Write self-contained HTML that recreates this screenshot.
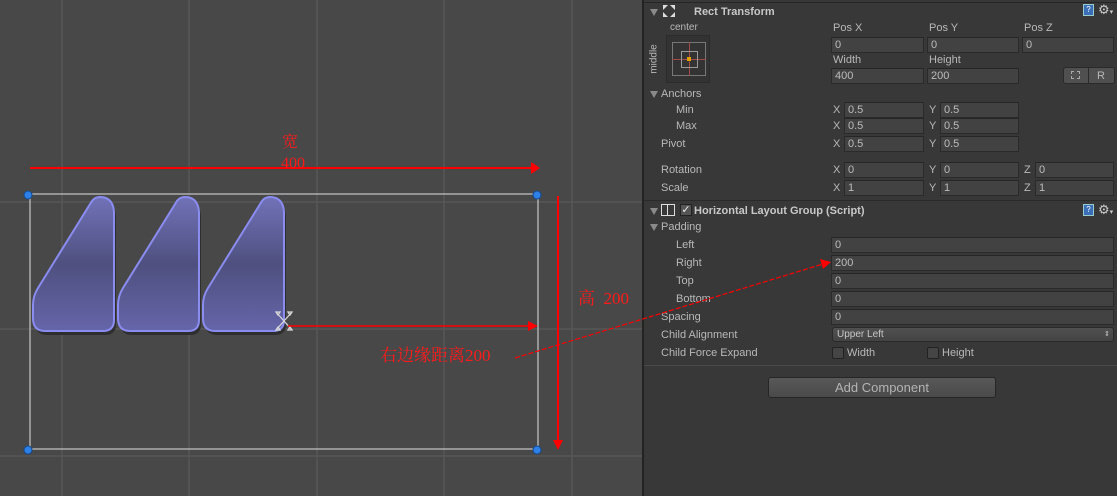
<!DOCTYPE html>
<html><head><meta charset="utf-8"><style>
*{margin:0;padding:0;box-sizing:border-box}
body{width:1117px;height:496px;overflow:hidden;background:#484848;font-family:"Liberation Sans","DejaVu Sans",sans-serif;position:relative}
#scene{position:absolute;left:0;top:0;width:644px;height:496px;background:#484848}
#panel{position:absolute;left:642px;top:0;width:475px;height:496px;background:#383838;border-left:2px solid #232323;color:#b8b8b8;font-size:11px}
.a{position:absolute;white-space:nowrap;line-height:14px}
.f{position:absolute;height:16px;background:#424242;border:1px solid #2a2a2a;border-top-color:#262626;color:#bcbcbc;font-size:11px;line-height:14px;padding-left:3px}
.hd{position:absolute;left:0;width:475px;height:1px;background:#262626}
.tri{position:absolute;width:0;height:0;border-left:4px solid transparent;border-right:4px solid transparent;border-top:7px solid #8a8a8a}
.cb{position:absolute;width:12px;height:12px;background:#454545;border:1px solid #222;border-radius:2px}
</style></head><body>
<div id="scene">
<svg width="644" height="496" style="position:absolute;left:0;top:0">
<g stroke="#575757" stroke-width="1.5">
<line x1="62" y1="0" x2="62" y2="496"/><line x1="189" y1="0" x2="189" y2="496"/><line x1="317" y1="0" x2="317" y2="496"/><line x1="444" y1="0" x2="444" y2="496"/><line x1="572" y1="0" x2="572" y2="496"/>
<line x1="0" y1="202" x2="644" y2="202"/><line x1="0" y1="329" x2="644" y2="329"/><line x1="0" y1="456" x2="644" y2="456"/>
</g>
<defs>
<linearGradient id="g" x1="0" y1="0" x2="0" y2="1"><stop offset="0" stop-color="#7172b8"/><stop offset="0.5" stop-color="#4f507f"/><stop offset="1" stop-color="#6565aa"/></linearGradient>
<path id="s" d="M100 197 Q113 197 114 212 L114 320 Q114 331 103 331 L45 331 Q33 331 33 318 L33 305 Q33 296 38 288 L92 201 Q95 197 100 197 Z"/>
</defs>
<g>
<use href="#s" transform="translate(2,4)" fill="#2e2e2e"/>
<use href="#s" transform="translate(87,4)" fill="#2e2e2e"/>
<use href="#s" transform="translate(172,4)" fill="#2e2e2e"/>
<use href="#s" fill="url(#g)" stroke="#8a8cf0" stroke-width="2"/>
<use href="#s" transform="translate(85,0)" fill="url(#g)" stroke="#8a8cf0" stroke-width="2"/>
<use href="#s" transform="translate(170,0)" fill="url(#g)" stroke="#8a8cf0" stroke-width="2"/>
</g>
<rect x="30" y="194" width="508" height="255" fill="none" stroke="#bdbdbd" stroke-width="1.3"/>
<g fill="#2e7fe6" stroke="#124a90" stroke-width="1"><circle cx="28" cy="195" r="4"/><circle cx="537" cy="195" r="4"/><circle cx="28" cy="450" r="4"/><circle cx="537" cy="450" r="4"/></g>
<g stroke="#d8d8d8" stroke-width="1.3" fill="none">
<path d="M276 312 L292 330 M292 312 L276 330"/><path d="M276 312 l4 0 l-2 3 z M292 312 l-4 0 l2 3z M276 330 l4 0 l-2 -3z M292 330 l-4 0 l2 -3z"/>
</g>
<g stroke="#ff0000" stroke-width="2" fill="#ff0000">
<line x1="30" y1="168" x2="532" y2="168"/><path d="M531 162 L540 168 L531 174 Z" stroke="none"/>
<line x1="558" y1="196" x2="558" y2="442"/><path d="M553 440 L558 450 L563 440 Z" stroke="none"/>
<line x1="288" y1="326" x2="530" y2="326" stroke-width="1.5"/><path d="M528 321 L538 326 L528 331 Z" stroke="none"/>
</g>
</svg>
<div class="a" style="left:282px;top:136px;color:#ff1a1a;font-family:'Liberation Serif','Noto Serif CJK SC',serif;font-size:16px">宽</div>
<div class="a" style="left:281px;top:157px;color:#ff1a1a;font-family:'Liberation Serif',serif;font-size:16px">400</div>
<div class="a" style="left:578px;top:292px;color:#ff1a1a;font-family:'Liberation Serif','Noto Serif CJK SC',serif;font-size:17px">高&nbsp; 200</div>
<div class="a" style="left:380px;top:349px;color:#ff1a1a;font-family:'Liberation Serif','Noto Serif CJK SC',serif;font-size:17px">右边缘距离200</div>
</div>
<div id="panel">
<div class="hd" style="top:2px"></div>
<div class="tri" style="left:6px;top:9px"></div>
<svg class="a" style="left:17px;top:3px" width="16" height="16"><g fill="#ddd"><path d="M2 2 L7 2 L2 7Z M14 2 L9 2 L14 7Z M2 14 L7 14 L2 9Z M14 14 L9 14 L14 9Z"/></g></svg>
<div class="a" style="left:50px;top:5px;font-weight:bold;color:#c8c8c8">Rect Transform</div>
<div class="a" style="left:439px;top:4px;width:11px;height:12px;background:#3a6fb8;border:1px solid #9cc;color:#fff;font-size:8px;line-height:10px;text-align:center">?</div>
<div class="a" style="left:454px;top:3px;color:#ccc;font-size:13px">⚙<span style="font-size:7px">▾</span></div>
<div class="a" style="left:26px;top:21px;font-size:10px">center</div>
<div class="a" style="left:-4px;top:52px;font-size:10px;transform:rotate(-90deg)">middle</div>
<div class="a" style="left:22px;top:35px;width:44px;height:48px;background:#333;border:1px solid #2c2c2c"></div>
<div class="a" style="left:28px;top:42px;width:34px;height:34px;border:1px solid #777"></div>
<div class="a" style="left:45px;top:42px;width:1px;height:34px;background:#a04a4a"></div>
<div class="a" style="left:28px;top:59px;width:34px;height:1px;background:#a04a4a"></div>
<div class="a" style="left:37px;top:51px;width:17px;height:17px;border:1px solid #999"></div>
<div class="a" style="left:43px;top:57px;width:4px;height:4px;background:#e0a000"></div>
<div class="a" style="left:189px;top:21px">Pos X</div><div class="a" style="left:285px;top:21px">Pos Y</div><div class="a" style="left:380px;top:21px">Pos Z</div>
<div class="f" style="left:187px;top:37px;width:93px">0</div><div class="f" style="left:283px;top:37px;width:92px">0</div><div class="f" style="left:378px;top:37px;width:92px">0</div>
<div class="a" style="left:189px;top:53px">Width</div><div class="a" style="left:285px;top:53px">Height</div>
<div class="f" style="left:187px;top:68px;width:93px">400</div><div class="f" style="left:283px;top:68px;width:92px">200</div>
<div class="a" style="left:419px;top:67px;width:52px;height:17px;background:#505050;border:1px solid #2a2a2a;border-radius:3px"></div>
<div class="a" style="left:444px;top:67px;width:1px;height:17px;background:#2a2a2a"></div>
<div class="a" style="left:427px;top:71px;width:9px;height:8px;border:1px dashed #aaa"></div>
<div class="a" style="left:453px;top:69px">R</div>
<div class="tri" style="left:6px;top:91px"></div>
<div class="a" style="left:17px;top:87px">Anchors</div>
<div class="a" style="left:32px;top:103px">Min</div><div class="a" style="left:32px;top:119px">Max</div><div class="a" style="left:17px;top:137px">Pivot</div>
<div class="a" style="left:17px;top:163px">Rotation</div><div class="a" style="left:17px;top:181px">Scale</div>
<div class="a" style="left:189px;top:103px">X</div><div class="f" style="left:200px;top:102px;width:80px">0.5</div>
<div class="a" style="left:285px;top:103px">Y</div><div class="f" style="left:296px;top:102px;width:79px">0.5</div>
<div class="a" style="left:189px;top:119px">X</div><div class="f" style="left:200px;top:118px;width:80px">0.5</div>
<div class="a" style="left:285px;top:119px">Y</div><div class="f" style="left:296px;top:118px;width:79px">0.5</div>
<div class="a" style="left:189px;top:137px">X</div><div class="f" style="left:200px;top:136px;width:80px">0.5</div>
<div class="a" style="left:285px;top:137px">Y</div><div class="f" style="left:296px;top:136px;width:79px">0.5</div>
<div class="a" style="left:189px;top:163px">X</div><div class="f" style="left:200px;top:162px;width:80px">0</div>
<div class="a" style="left:285px;top:163px">Y</div><div class="f" style="left:296px;top:162px;width:79px">0</div>
<div class="a" style="left:380px;top:163px">Z</div><div class="f" style="left:391px;top:162px;width:79px">0</div>
<div class="a" style="left:189px;top:181px">X</div><div class="f" style="left:200px;top:180px;width:80px">1</div>
<div class="a" style="left:285px;top:181px">Y</div><div class="f" style="left:296px;top:180px;width:79px">1</div>
<div class="a" style="left:380px;top:181px">Z</div><div class="f" style="left:391px;top:180px;width:79px">1</div>
<div class="hd" style="top:200px;background:#2a2a2a"></div>
<div class="tri" style="left:6px;top:208px"></div>
<div class="a" style="left:17px;top:204px;width:14px;height:12px;border:1px solid #ddd"></div>
<div class="a" style="left:23px;top:204px;width:1px;height:12px;background:#ddd"></div>
<div class="a" style="left:36px;top:204px;width:12px;height:12px;background:#555;border:1px solid #222;color:#eee;font-size:11px;line-height:10px;text-align:center">✓</div>
<div class="a" style="left:50px;top:204px;font-weight:bold;color:#c8c8c8">Horizontal Layout Group (Script)</div>
<div class="a" style="left:439px;top:204px;width:11px;height:12px;background:#3a6fb8;border:1px solid #9cc;color:#fff;font-size:8px;line-height:10px;text-align:center">?</div>
<div class="a" style="left:454px;top:203px;color:#ccc;font-size:13px">⚙<span style="font-size:7px">▾</span></div>
<div class="tri" style="left:6px;top:224px"></div>
<div class="a" style="left:17px;top:220px">Padding</div>
<div class="a" style="left:32px;top:238px">Left</div><div class="f" style="left:187px;top:237px;width:283px">0</div>
<div class="a" style="left:32px;top:256px">Right</div><div class="f" style="left:187px;top:255px;width:283px">200</div>
<div class="a" style="left:32px;top:274px">Top</div><div class="f" style="left:187px;top:273px;width:283px">0</div>
<div class="a" style="left:32px;top:292px">Bottom</div><div class="f" style="left:187px;top:291px;width:283px">0</div>
<div class="a" style="left:17px;top:310px">Spacing</div><div class="f" style="left:187px;top:309px;width:283px">0</div>
<div class="a" style="left:17px;top:328px">Child Alignment</div>
<div class="a" style="left:188px;top:327px;width:282px;height:15px;background:linear-gradient(#505050,#444);border:1px solid #2a2a2a;border-radius:3px;font-size:10px;line-height:13px;padding-left:4px;color:#c8c8c8">Upper Left<span style="position:absolute;right:3px;top:0;font-size:7px">⇕</span></div>
<div class="a" style="left:17px;top:346px">Child Force Expand</div>
<div class="cb" style="left:188px;top:347px"></div><div class="a" style="left:203px;top:346px">Width</div>
<div class="cb" style="left:283px;top:347px"></div><div class="a" style="left:298px;top:346px">Height</div>
<div class="hd" style="top:365px;background:#4a4a4a"></div>
<div class="a" style="left:124px;top:377px;width:228px;height:21px;background:linear-gradient(#585858,#4a4a4a);border:1px solid #262626;border-radius:3px;text-align:center;line-height:19px;font-size:13px;color:#b4b4b4">Add Component</div>
</div>
<svg width="1117" height="496" style="position:absolute;left:0;top:0;pointer-events:none">
<line x1="515" y1="358" x2="823" y2="264" stroke="#ff0000" stroke-width="1.2" stroke-dasharray="5,2"/>
<path d="M820 259 L831 262 L823 269 Z" fill="#ff0000"/>
</svg>
</body></html>
